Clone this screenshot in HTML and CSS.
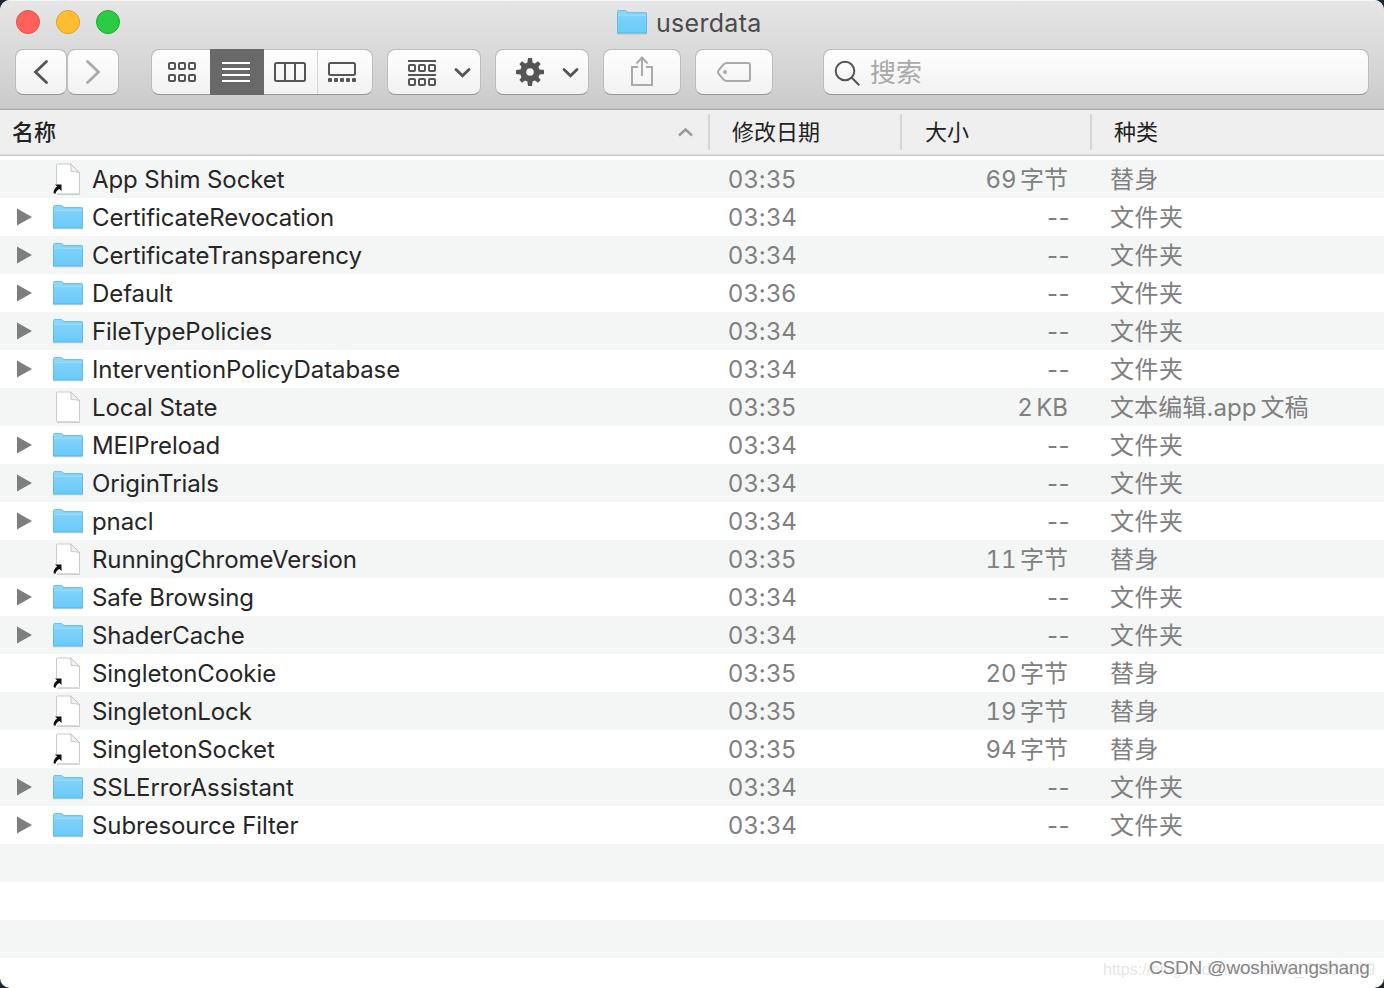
FILE: index.html
```html
<!DOCTYPE html>
<html lang="zh-CN">
<head>
<meta charset="utf-8">
<title>userdata</title>
<link rel="stylesheet" href="styles.css">
</head>
<body>
<svg class="defs" width="0" height="0">
  <defs>
    <linearGradient id="blue" x1="0" y1="0" x2="0" y2="1"><stop offset="0" stop-color="#7fd2fb"/><stop offset="1" stop-color="#6acaf8"/></linearGradient>
    <symbol id="folder" viewBox="0 0 32 28">
      <path d="M1 4.500Q1 2 2.500 2H9q1 0 2 1.200l1 .9h17.500q1.500 0 1.500 1.500V25H1z" fill="#6bc3ec"/>
      <path d="M2 7V3h7.500l2 2.200H30V7z" fill="#8bd6fa"/>
      <path d="M1 7h30v18H1z" fill="url(#blue)"/>
      <path d="M1 7.500h30" stroke="#97ddfd"/>
      <path d="M1.500 7v18M30.500 7v18" stroke="#65bbe5"/>
      <path d="M1 25h30" stroke="#5fb3dd"/>
      <path d="M1.500 26h29" stroke="#000" stroke-opacity=".12"/>
    </symbol>
    <symbol id="file" viewBox="0 0 32 34">
      <path d="M5 32.500h23" stroke="#000" stroke-opacity=".14"/>
      <path d="M4.500 3Q4.500 2 5.500 2h13l9 8.500V31q0 .8-1 .8h-21q-1 0-1-.8z" fill="#fff" stroke="#cacaca"/>
      <path d="M18.500 2q.8 3.500.5 7.500 4.500 0 8.500 1z" fill="#f3f3f3" stroke="#bdbdbd" stroke-width=".8"/>
    </symbol>
    <symbol id="alias" viewBox="0 0 32 34">
      <use href="#file" width="32" height="34"/>
      <path d="M2 22h8.500v9L8 28.600q-3 1.600-3.200 4.200H1q-.3-4.700 3.700-7.700z" fill="#fff"/>
      <path d="M3 22.500h6.500V29l-2.100-2.100Q3.700 28.900 3.500 31.900L1.500 31q.1-4 3.600-6.400z" fill="#111"/>
    </symbol>
    <symbol id="tri" viewBox="0 0 16 20"><path d="M1 1.500L16 10 1 18.500z" fill="#7e7e7e"/></symbol>
  </defs>
</svg>
<main class="window">
  <header class="chrome">
    <div class="titlebar">
      <div class="lights"><i class="red"></i><i class="yellow"></i><i class="green"></i></div>
      <h1><svg width="32" height="28"><use href="#folder"/></svg><span>userdata</span></h1>
    </div>
    <div class="toolbar">
      <div class="btn nav"><svg width="50" height="44"><path d="M30.500 11.500L19.500 22l11 10.500" class="s3"/></svg></div>
      <div class="btn nav next"><svg width="50" height="44"><path d="M19.500 11.500L30.500 22l-11 10.500" class="s3 dim"/></svg></div>
      <div class="btn views">
        <span class="v1"><svg width="58" height="44"><g class="s2"><rect x="17" y="13" width="6" height="6" rx="1"/><rect x="27" y="13" width="6" height="6" rx="1"/><rect x="37" y="13" width="6" height="6" rx="1"/><rect x="17" y="25" width="6" height="6" rx="1"/><rect x="27" y="25" width="6" height="6" rx="1"/><rect x="37" y="25" width="6" height="6" rx="1"/></g></svg></span>
        <span class="v2"><svg width="54" height="46"><path d="M12 14h28M12 20h28M12 26h28M12 32h28" stroke="#fff" stroke-width="2"/></svg></span>
        <span class="v3"><svg width="53" height="44"><g class="s2"><rect x="11" y="13" width="30" height="18" rx="1.500"/><path d="M21 13v18M31 13v18"/></g></svg></span>
        <span class="v4"><svg width="54" height="44"><rect x="11" y="13" width="26" height="12" rx="1.500" class="s2"/><g fill="#555"><rect x="10" y="28" width="4" height="4" rx="1"/><rect x="16" y="28" width="4" height="4" rx="1"/><rect x="22" y="28" width="4" height="4" rx="1"/><rect x="28" y="28" width="4" height="4" rx="1"/><rect x="34" y="28" width="4" height="4" rx="1"/></g></svg></span>
      </div>
      <div class="btn arrange"><svg width="92" height="44"><g class="s2"><path d="M20 11h28M20 25h28"/><rect x="21" y="15" width="6" height="6" rx="1"/><rect x="31" y="15" width="6" height="6" rx="1"/><rect x="41" y="15" width="6" height="6" rx="1"/><rect x="21" y="29" width="6" height="6" rx="1"/><rect x="31" y="29" width="6" height="6" rx="1"/><rect x="41" y="29" width="6" height="6" rx="1"/></g><path d="M68 19.500l6.500 6.300 6.500-6.300" class="s3"/></svg></div>
      <div class="btn action"><svg width="92" height="44"><g transform="translate(34 22)" fill="#555"><g id="teeth"><path d="M-2.800-8L-2-14H2L2.800-8zM-2.800 8L-2 14H2L2.800 8zM-8-2.800L-14-2V2L-8 2.800zM8-2.800L14-2V2L8 2.800z"/></g><use href="#teeth" transform="rotate(45) scale(.94)"/><circle r="6.800" fill="none" stroke="#555" stroke-width="6"/></g><path d="M68 19.500l6.500 6.300 6.500-6.300" class="s3"/></svg></div>
      <div class="btn share"><svg width="76" height="44"><g class="s2 dim"><path d="M34 17h-6v18h20V17h-6M38 26V8M32.500 13.500L38 7.500l5.500 6"/></g></svg></div>
      <div class="btn tag"><svg width="76" height="44"><g class="s2 dim"><path d="M31 13h21q2 0 2 2v14q0 2-2 2H31q-2 0-3.500-1.500L22.800 24q-1.500-2 0-4l4.700-5.500Q29 13 31 13z"/></g><circle cx="29" cy="22" r="2" fill="#aaa"/></svg></div>
      <div class="btn search"><svg width="46" height="44"><g fill="none" stroke="#555" stroke-width="2"><circle cx="21" cy="21" r="9.300"/><path d="M27.800 27.800l7.500 7.500"/></g></svg><span>搜索</span></div>
    </div>
  </header>
  <div class="columns">
    <div class="c-name">名称<svg width="16" height="12"><path d="M2 9.500l6.500-6 6.500 6" fill="none" stroke="#999" stroke-width="2.400"/></svg></div>
    <div class="c-date">修改日期</div><div class="c-size">大小</div><div class="c-kind">种类</div>
  </div>
  <div class="list">
    <div class="row"><i></i><svg class="doc"><use href="#alias"/></svg><b>App Shim Socket</b><time>03:35</time><em>69 字节</em><span>替身</span></div>
    <div class="row"><svg class="tri"><use href="#tri"/></svg><svg class="dir"><use href="#folder"/></svg><b>CertificateRevocation</b><time>03:34</time><em class="none">--</em><span>文件夹</span></div>
    <div class="row"><svg class="tri"><use href="#tri"/></svg><svg class="dir"><use href="#folder"/></svg><b>CertificateTransparency</b><time>03:34</time><em class="none">--</em><span>文件夹</span></div>
    <div class="row"><svg class="tri"><use href="#tri"/></svg><svg class="dir"><use href="#folder"/></svg><b>Default</b><time>03:36</time><em class="none">--</em><span>文件夹</span></div>
    <div class="row"><svg class="tri"><use href="#tri"/></svg><svg class="dir"><use href="#folder"/></svg><b>FileTypePolicies</b><time>03:34</time><em class="none">--</em><span>文件夹</span></div>
    <div class="row"><svg class="tri"><use href="#tri"/></svg><svg class="dir"><use href="#folder"/></svg><b>InterventionPolicyDatabase</b><time>03:34</time><em class="none">--</em><span>文件夹</span></div>
    <div class="row"><i></i><svg class="doc"><use href="#file"/></svg><b>Local State</b><time>03:35</time><em>2 KB</em><span class="mixed">文本编辑.app 文稿</span></div>
    <div class="row"><svg class="tri"><use href="#tri"/></svg><svg class="dir"><use href="#folder"/></svg><b>MEIPreload</b><time>03:34</time><em class="none">--</em><span>文件夹</span></div>
    <div class="row"><svg class="tri"><use href="#tri"/></svg><svg class="dir"><use href="#folder"/></svg><b>OriginTrials</b><time>03:34</time><em class="none">--</em><span>文件夹</span></div>
    <div class="row"><svg class="tri"><use href="#tri"/></svg><svg class="dir"><use href="#folder"/></svg><b>pnacl</b><time>03:34</time><em class="none">--</em><span>文件夹</span></div>
    <div class="row"><i></i><svg class="doc"><use href="#alias"/></svg><b>RunningChromeVersion</b><time>03:35</time><em>11 字节</em><span>替身</span></div>
    <div class="row"><svg class="tri"><use href="#tri"/></svg><svg class="dir"><use href="#folder"/></svg><b>Safe Browsing</b><time>03:34</time><em class="none">--</em><span>文件夹</span></div>
    <div class="row"><svg class="tri"><use href="#tri"/></svg><svg class="dir"><use href="#folder"/></svg><b>ShaderCache</b><time>03:34</time><em class="none">--</em><span>文件夹</span></div>
    <div class="row"><i></i><svg class="doc"><use href="#alias"/></svg><b>SingletonCookie</b><time>03:35</time><em>20 字节</em><span>替身</span></div>
    <div class="row"><i></i><svg class="doc"><use href="#alias"/></svg><b>SingletonLock</b><time>03:35</time><em>19 字节</em><span>替身</span></div>
    <div class="row"><i></i><svg class="doc"><use href="#alias"/></svg><b>SingletonSocket</b><time>03:35</time><em>94 字节</em><span>替身</span></div>
    <div class="row"><svg class="tri"><use href="#tri"/></svg><svg class="dir"><use href="#folder"/></svg><b>SSLErrorAssistant</b><time>03:34</time><em class="none">--</em><span>文件夹</span></div>
    <div class="row"><svg class="tri"><use href="#tri"/></svg><svg class="dir"><use href="#folder"/></svg><b>Subresource Filter</b><time>03:34</time><em class="none">--</em><span>文件夹</span></div>
    <div class="row"></div><div class="row"></div><div class="row"></div><div class="row last"></div>
  </div>
  <div class="url">https://blog.csdn.net/weixin_43821079</div>
  <div class="mark">CSDN @woshiwangshang</div>
</main>
</body>
</html>
```
FILE: styles.css
```css
* { box-sizing: border-box; }
body { margin: 0; background: #1d2730; font-family: Inter, "Noto Sans CJK SC", sans-serif; }
svg { display: block; flex: none; }
.defs { position: absolute; }
.window { position: relative; width: 1384px; height: 988px; overflow: hidden; border-radius: 10px; background: #fff; }
.chrome { height: 110px; background: linear-gradient(#e6e6e6, #cbcbcb); border-top: 1px solid #f4f4f4; border-bottom: 1px solid #a8a8a8; box-shadow: inset 0 -1px #bdbdbd; }
.titlebar { display: flex; height: 48px; align-items: flex-start; }
.lights { display: flex; gap: 16px; padding: 9px 0 0 16px; width: 616px; }
.lights i { width: 24px; height: 24px; border-radius: 50%; border: 1px solid; }
.lights .red { background: #ff6059; border-color: #e5504a; }
.lights .yellow { background: #ffbe2f; border-color: #dfa023; }
.lights .green { background: #29cc42; border-color: #1eac2e; }
h1 { margin: 0; padding-top: 7px; display: flex; gap: 8px; font-size: 25px; font-weight: 400; line-height: 30px; color: #4b4b4b; letter-spacing: .3px; }
.toolbar { display: flex; padding-left: 15px; }
.btn { height: 46px; border: 1px solid #bdbdbd; border-bottom-color: #989898; border-radius: 8px; background: linear-gradient(#fefefe, #f2f2f2); background-clip: padding-box; display: flex; }
.nav { width: 52px; }
.views { width: 222px; margin-left: 32px; }
.v2 { background: #696969; margin: -1px 0; }
.v3 { border-right: 1px solid #d5d5d5; }
.arrange, .action { width: 94px; margin-left: 14px; }
.share { width: 78px; margin-left: 14px; }
.tag { width: 78px; margin-left: 14px; }
.search { width: 546px; margin-left: 50px; color: #a9a9a9; font-size: 26px; line-height: 46px; }
.s2, .s3 { fill: none; stroke: #555; stroke-width: 2; }
.s3 { stroke-width: 2.800; stroke-linecap: round; stroke-linejoin: miter; }
.s2.dim, .s3.dim { stroke: #aaa; }
.columns { display: flex; align-items: flex-start; padding-top: 4px; height: 46px; background: #efefef; border-bottom: 1px solid #c8c8c8; box-shadow: inset 0 -1px #dedede; font-size: 22px; line-height: 36px; color: #222; }
.columns div { height: 36px; border-right: 2px solid #d5d5d5; padding-left: 22px; }
.columns .c-name { display: flex; width: 710px; padding: 0 15px 0 12px; justify-content: space-between; align-items: center; font-weight: 500; }
.c-date { width: 192px; }
.columns .c-size { width: 190px; padding-left: 23px; }
.columns .c-kind { border: 0; }
.list { padding-top: 4px; }
.row { display: grid; grid-template-columns: 52px 40px 636px 160px 180px 1fr; align-items: center; height: 38px; font-size: 24px; line-height: 36px; color: #808080; white-space: nowrap; }
.row:nth-child(odd) { background: #f4f5f5; }
.row.last { height: 30px; }
.row .tri { width: 16px; height: 20px; margin-left: 16px; }
.row .dir { width: 32px; height: 28px; }
.row .doc { width: 32px; height: 34px; }
.row b, .row time, .row em, .row span { padding-top: 2px; }
.row b { font-weight: 400; color: #262626; letter-spacing: -.09px; }
.row time { letter-spacing: .4px; }
.row em { font-style: normal; text-align: right; word-spacing: -3px; font-variant-numeric: tabular-nums; }
.row .none { letter-spacing: .5px; margin-right: -2px; font-variant-numeric: normal; }
.row span { padding-left: 42px; letter-spacing: .5px; word-spacing: -3px; }
.row .mixed { letter-spacing: .1px; }
.url, .mark { position: absolute; font-family: "Liberation Sans", Arial, sans-serif; white-space: nowrap; }
.url { left: 1103px; top: 960px; font-size: 16px; line-height: 20px; color: #e6e6e6; }
.mark { left: 1149px; top: 957px; font-size: 19px; line-height: 22px; letter-spacing: -.17px; color: #848484; text-shadow: 1px 1px 0 #fff; }
```
